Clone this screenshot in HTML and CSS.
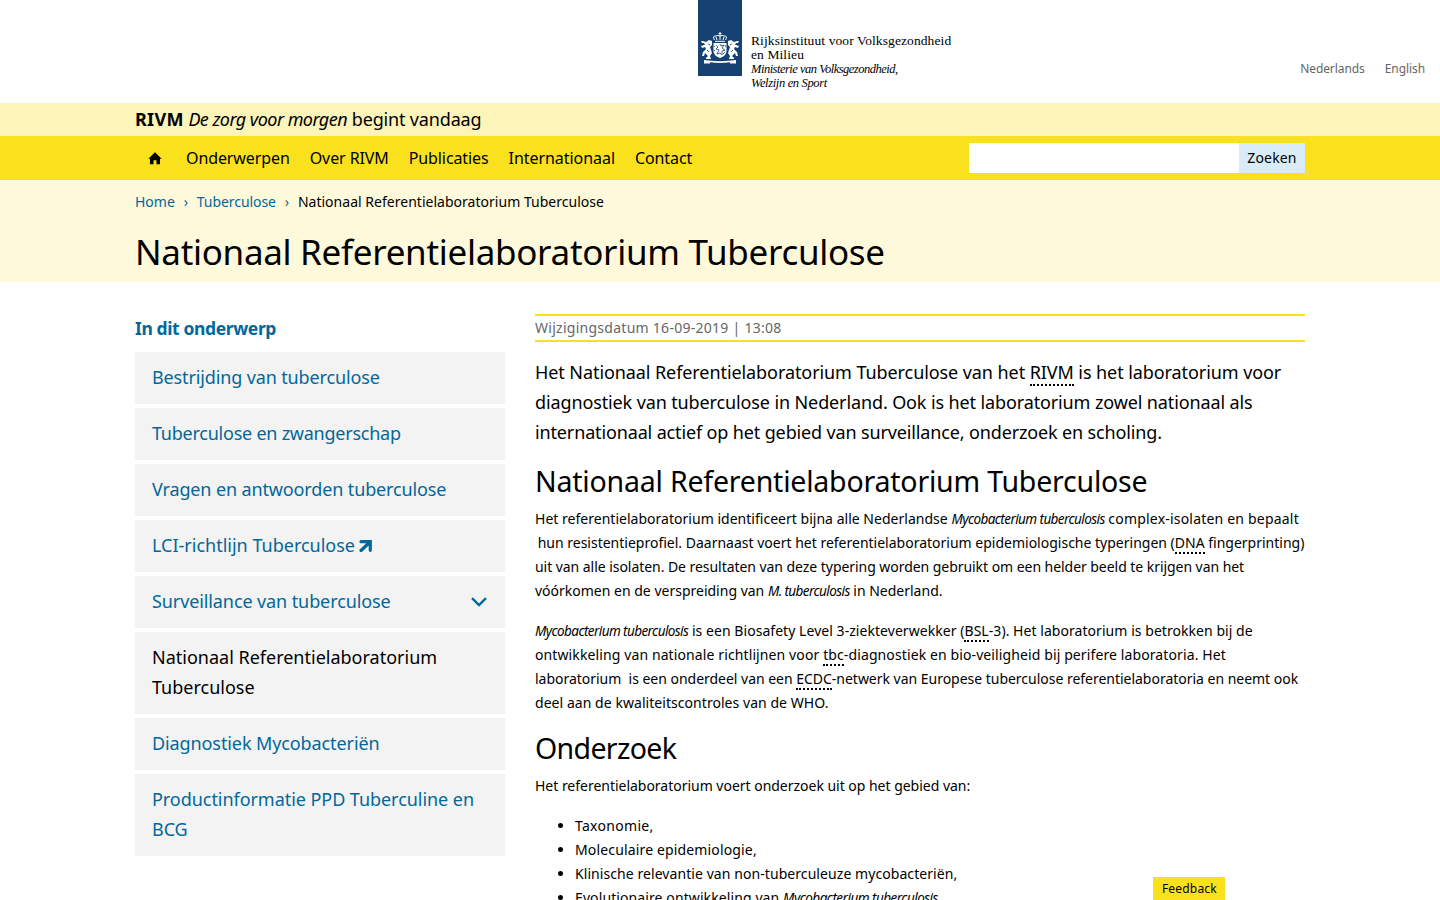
FILE: index.html
```html
<!DOCTYPE html>
<html lang="nl">
<head>
<meta charset="utf-8">
<title>Nationaal Referentielaboratorium Tuberculose | RIVM</title>
<link rel="stylesheet" href="styles.css">
</head>
<body>
<header class="top">
  <div class="logo">
    <div class="ribbon">
      <svg class="arms" viewBox="0 0 38 33" width="38" height="33" fill="#fff">
        <path d="M18.500 0h1v1h1v1h-1v2h-1V2h-1V1h1z"/>
        <path d="M13.500 8Q11 4 14.500 4Q17 3 19 4Q21 3 23.500 4Q27 4 24.500 8M16 8l-1-3M22 8l1-3M19 4v4M14 9.300h10" fill="none" stroke="#fff" stroke-width="1"/>
        <path d="M12.500 11h13v8q0 5-6.500 7-6.500-2-6.500-7z"/>
        <path d="M15 13l2 2-2 2 3 1-2 4 3-1 2 2 0-4 3-1-3-2 2-3-3 1-1-2M13 14l1 1M13 18l1 1M24 13l1 2M24 20l-2 2" fill="none" stroke="#154273" stroke-width=".8"/>
        <path id="lion" d="M8 8l3 1 0 4-2 2 2 6-2 3 1 3H5l0-1 2-2-3-3-1 3-2 0 1-4 3-3-1-2-3 1-1-2 3-1 1 0-1-2-2 0-1-2 2 0 3 1z"/>
        <use href="#lion" transform="translate(38 0) scale(-1 1)"/>
        <path d="M3 28l5 .5q11 1.500 22 0l5-.5v3.500h-6v-1.200q-10 1.200-20 0v1.200H3z"/>
        <path d="M7 12l2 1M6 18l2 2M31 12l-2 1M32 18l-2 2" fill="none" stroke="#154273" stroke-width=".8"/>
      </svg>
    </div>
    <div class="wordmark">
      <span class="w1">Rijksinstituut voor Volksgezondheid</span>
      <span class="w2">en Milieu</span>
      <i class="w3">Ministerie van Volksgezondheid,</i>
      <i class="w4">Welzijn en Sport</i>
    </div>
  </div>
  <div class="languages"><a class="nl">Nederlands</a><a class="en">English</a></div>
</header>
<div class="slogan"><div class="wrap"><b>RIVM</b> <i>De zorg voor morgen</i> <span>begint vandaag</span></div></div>
<nav class="nav">
  <div class="wrap nav-row">
    <svg class="home" viewBox="0 0 14 13" width="14" height="13"><path d="M7 .3L13.700 6.800H12V12.300H8.500V8.300H5.500V12.300H2V6.800H.3z"/></svg>
    <a class="n1">Onderwerpen</a><a class="n2">Over RIVM</a><a class="n3">Publicaties</a><a class="n4">Internationaal</a><a class="n5">Contact</a>
    <form class="search"><input type="text" aria-label="Zoeken"><button type="button">Zoeken</button></form>
  </div>
</nav>
<section class="hero">
  <div class="wrap">
    <div class="crumbs"><a class="c1">Home</a><span class="sep">›</span><a class="c2">Tuberculose</a><span class="sep">›</span><span class="here">Nationaal Referentielaboratorium Tuberculose</span></div>
    <h1>Nationaal Referentielaboratorium Tuberculose</h1>
  </div>
</section>
<div class="wrap columns">
  <aside>
    <h2 class="side-title">In dit onderwerp</h2>
    <ul class="menu">
      <li><span class="m1">Bestrijding van tuberculose</span></li>
      <li><span class="m2">Tuberculose en zwangerschap</span></li>
      <li><span class="m3">Vragen en antwoorden tuberculose</span></li>
      <li><span class="m4">LCI-richtlijn Tuberculose</span><svg class="ext" viewBox="0 0 13 12" width="13" height="12"><path d="M2 1.700H11.300V10.300M11 2L2 10.500"/></svg></li>
      <li><span class="m5">Surveillance van tuberculose</span><svg class="chev" viewBox="0 0 16 10" width="16" height="10"><path d="M1 1.200L8 8L15 1.200"/></svg></li>
      <li class="current"><span class="m6">Nationaal Referentielaboratorium<br>Tuberculose</span></li>
      <li><span class="m7">Diagnostiek Mycobacteriën</span></li>
      <li><span class="m8">Productinformatie PPD Tuberculine en<br>BCG</span></li>
    </ul>
  </aside>
  <main>
    <div class="date"><span>Wijzigingsdatum 16-09-2019 | 13:08</span></div>
    <p class="intro"><span class="i1">Het Nationaal Referentielaboratorium Tuberculose van het <abbr>RIVM</abbr> is het laboratorium voor</span><br><span class="i2">diagnostiek van tuberculose in Nederland. Ook is het laboratorium zowel nationaal als</span><br><span class="i3">internationaal actief op het gebied van surveillance, onderzoek en scholing.</span></p>
    <h2 class="h-lab">Nationaal Referentielaboratorium Tuberculose</h2>
    <p><span class="a1">Het referentielaboratorium identificeert bijna alle Nederlandse <i>Mycobacterium tuberculosis</i> <span class="tail">complex-isolaten en bepaalt</span></span><br><span class="a2">&nbsp;hun resistentieprofiel. Daarnaast voert het referentielaboratorium epidemiologische typeringen (<abbr>DNA</abbr> fingerprinting)</span><br><span class="a3">uit van alle isolaten. De resultaten van deze typering worden gebruikt om een helder beeld te krijgen van het</span><br><span class="a4">vóórkomen en de verspreiding van <i>M. tuberculosis</i> in Nederland.</span></p>
    <p><span class="b1"><i>Mycobacterium tuberculosis</i> is een Biosafety Level 3-ziekteverwekker (<abbr>BSL</abbr>-3). Het laboratorium is betrokken bij de</span><br><span class="b2">ontwikkeling van nationale richtlijnen voor <abbr>tbc</abbr>-diagnostiek en bio-veiligheid bij perifere laboratoria. Het</span><br><span class="b3">laboratorium &nbsp;is een onderdeel van een <abbr>ECDC</abbr>-netwerk van Europese tuberculose referentielaboratoria en neemt ook</span><br><span class="b4">deel aan de kwaliteitscontroles van de WHO.</span></p>
    <h2 class="h-onderzoek">Onderzoek</h2>
    <p><span class="d1">Het referentielaboratorium voert onderzoek uit op het gebied van:</span></p>
    <ul class="topics">
      <li><span class="t1">Taxonomie,</span></li>
      <li><span class="t2">Moleculaire epidemiologie,</span></li>
      <li><span class="t3">Klinische relevantie van non-tuberculeuze mycobacteriën,</span></li>
      <li><span class="t4">Evolutionaire ontwikkeling van <i>Mycobacterium tuberculosis</i>,</span></li>
    </ul>
  </main>
</div>
<button class="feedback" type="button">Feedback</button>
</body>
</html>
```
FILE: styles.css
```css
* { box-sizing: border-box; }
html, body { height: 900px; overflow: hidden; }
body { margin: 0; font: 14px/24px "Noto Sans", sans-serif; color: #000; background: #fff; white-space: nowrap; }
h1, h2, p, ul { margin: 0; padding: 0; font-weight: 400; }
ul { list-style: none; }
svg { display: block; flex: none; }
.wrap { width: 1170px; margin: 0 auto; }

.top { height: 103px; display: flex; justify-content: flex-end; }
.logo { display: flex; margin-right: auto; padding-left: 698px; gap: 9px; }
.ribbon { width: 44px; height: 76px; background: #154273; padding: 32px 3px 0; }
.wordmark { display: flex; flex-direction: column; padding-top: 34px; font: 13.500px/14px "Liberation Serif", serif; letter-spacing: .1px; }
.wordmark i { font-size: 12.500px; letter-spacing: -.5px; }
.wordmark .w4 { letter-spacing: -.35px; }
.languages { display: flex; gap: 20px; padding: 57px 15px 0 0; font-size: 12px; letter-spacing: -.08px; color: #666; }

.slogan { height: 33px; background: #fcf4b9; font-size: 18px; line-height: 32px; }
.slogan b { letter-spacing: .3px; }
.slogan i { letter-spacing: -.55px; }
.slogan span { letter-spacing: -.16px; }
.nav { height: 44px; background: #f9e11e; font-size: 16px; line-height: 44px; letter-spacing: -.1px; }
.nav-row { display: flex; align-items: center; }
.home { margin: 0 24px 0 13px; }
.nav-row a { margin-right: 20px; }
.nav-row .n4 { letter-spacing: -.05px; }
.search { display: flex; margin-left: auto; height: 30px; }
.search input { width: 270px; border: 0; padding: 0 8px; background: #fff; }
.search button { width: 66px; border: 0; padding: 0; background: #d9ebf7; font: 14px/30px "Noto Sans", sans-serif; letter-spacing: .15px; color: #000; }

.hero { height: 102px; background: #fef9db; }
.crumbs { display: flex; height: 44px; line-height: 44px; color: #01689b; }
.crumbs .sep { width: 22px; text-align: center; }
.crumbs .c2 { letter-spacing: -.07px; }
.crumbs .here { color: #000; letter-spacing: .02px; }
h1 { font-size: 35px; line-height: 55px; letter-spacing: -.3px; }

.columns { display: flex; gap: 30px; padding-top: 32px; }
aside { width: 370px; }
.side-title { font-size: 17.500px; font-weight: 700; line-height: 28px; height: 38px; letter-spacing: -.38px; color: #01689b; }
.menu { display: flex; flex-direction: column; gap: 4px; }
.menu li { display: flex; align-items: center; background: #f3f3f3; color: #01689b; font-size: 18px; line-height: 30px; padding: 10px 17px 12px; }
.menu .current { color: #000; }
.m1, .m3 { letter-spacing: -.13px; }
.m2 { letter-spacing: -.24px; }
.m5, .m7 { letter-spacing: -.1px; }
.m8 { letter-spacing: -.05px; }
.ext { margin: 1px 0 0 4px; fill: none; stroke: #01689b; stroke-width: 3.200; stroke-linecap: round; }
.chev { margin: 1px 1px 0 auto; fill: none; stroke: #01689b; stroke-width: 2.400; }

main { width: 770px; }
.date { height: 28px; border-top: 2px solid #f9e11e; border-bottom: 2px solid #f9e11e; letter-spacing: .27px; color: #666; }
.intro { font-size: 18px; line-height: 30px; padding: 15px 0; }
.i1 { letter-spacing: -.08px; }
.i2 { letter-spacing: -.12px; }
.i3 { letter-spacing: -.14px; }
abbr { border-bottom: 2px dotted #000; }
main h2 { font-size: 28.500px; line-height: 38px; }
main .h-lab { letter-spacing: -.2px; padding-bottom: 7px; }
main p { margin-bottom: 16px; }
main .h-onderzoek { letter-spacing: -.65px; margin-top: -2px; padding-bottom: 7px; }
main .intro { margin: 0; }
main i { font-size: 13.500px; letter-spacing: -.58px; }
.a1 { letter-spacing: .02px; }
.tail { letter-spacing: .2px; }
.a2 { margin-left: -1px; }
.a3 { letter-spacing: -.05px; }
.b1, .b4 { letter-spacing: .05px; }
.b2 { letter-spacing: .11px; }
.b3, .d1 { letter-spacing: -.02px; }
.t1 { letter-spacing: .3px; }
.t2 { letter-spacing: .15px; }
.t3 { letter-spacing: .07px; }
.t4 { letter-spacing: .1px; }
.t4 i { letter-spacing: -.52px; }
.topics { padding-left: 40px; list-style: disc; }

.feedback { position: fixed; left: 1153.400px; top: 876.500px; width: 72px; height: 24px; border: 0; padding: 0; background: #f9e11e; font: 12px/22px "Noto Sans", sans-serif; letter-spacing: .2px; color: #000; }
```
